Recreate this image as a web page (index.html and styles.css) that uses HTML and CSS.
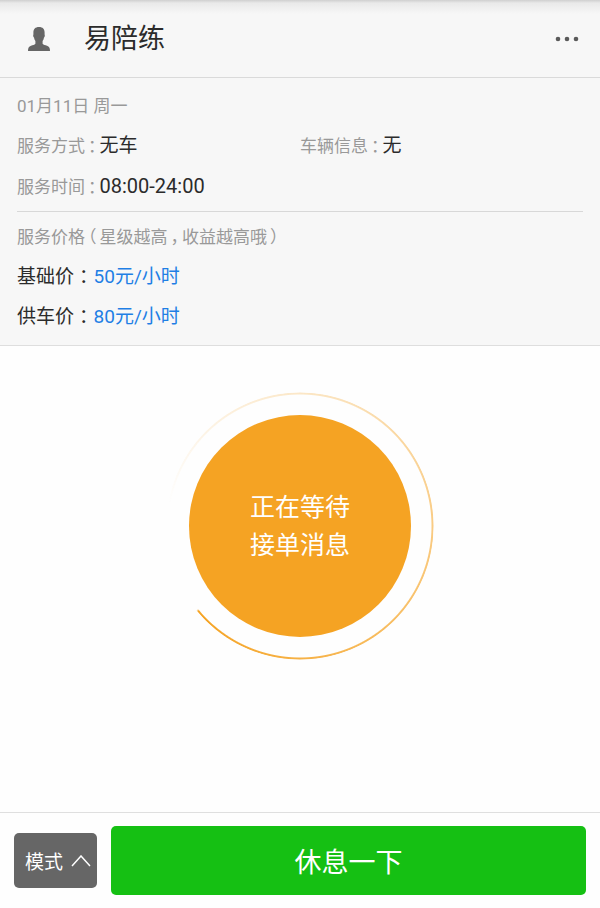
FILE: index.html
```
<!DOCTYPE html>
<html lang="zh-CN">
<head>
<meta charset="UTF-8" />
<meta name="viewport" content="width=device-width, initial-scale=1" />
<title>易陪练</title>
<link rel="stylesheet" href="styles.css">
</head>
<body>
  <header class="topbar">
    <button class="icon-btn" type="button" aria-label="个人中心">
      <svg class="user-icon" viewBox="0 0 26 26" aria-hidden="true">
        <path d="M13 1C9.200 1 7.400 3.200 7.400 6.500v2c-.5.5-.2 2.700.6 3.100.2 1.500.7 2.600 1.400 3.400v2.700C8.500 18.800 6.800 19 5 19.700 2.800 20.500 2 22 2 25h22c0-3-.8-4.500-3-5.300-1.800-.7-3.500-.9-4.400-2V15c.7-.8 1.200-1.900 1.400-3.400.8-.4 1.100-2.600.6-3.100v-2C18.600 3.200 16.800 1 13 1z"/>
      </svg>
    </button>
    <h1 class="title">易陪练</h1>
    <button class="icon-btn more" type="button" aria-label="更多">
      <svg class="more-icon" viewBox="0 0 26 6" aria-hidden="true">
        <circle cx="4" cy="3" r="2.300"/>
        <circle cx="13" cy="3" r="2.300"/>
        <circle cx="22" cy="3" r="2.300"/>
      </svg>
    </button>
  </header>

  <section class="info">
    <div class="info-group">
      <p class="row label">01月11日 周一</p>
      <div class="row cols">
        <p><span class="label">服务方式<span class="punct">：</span></span><span class="value">无车</span></p>
        <p><span class="label">车辆信息<span class="punct">：</span></span><span class="value">无</span></p>
      </div>
      <p class="row"><span class="label">服务时间<span class="punct">：</span></span><span class="time">08:00-24:00</span></p>
    </div>
    <div class="info-group">
      <p class="row label">服务价格<span class="punct">（</span>星级越高<span class="punct">，</span>收益越高哦<span class="punct">）</span></p>
      <p class="row value">基础价<span class="punct">：</span><span class="price">50元/小时</span></p>
      <p class="row value">供车价<span class="punct">：</span><span class="price">80元/小时</span></p>
    </div>
  </section>

  <main class="waiting">
    <div class="ring">
      <div class="disc" role="status">正在等待<br>接单消息</div>
    </div>
  </main>

  <footer class="actions">
    <button class="btn mode" type="button">模式
      <svg class="chevron" viewBox="0 0 20 12" aria-hidden="true">
        <path d="M1 11 10 1l9 10"/>
      </svg>
    </button>
    <button class="btn rest" type="button">休息一下</button>
  </footer>
</body>
</html>
```
FILE: styles.css
```
* {
  box-sizing: border-box;
}

body {
  margin: 0;
  min-height: 100vh;
  display: flex;
  flex-direction: column;
  background: #fefefe;
  color: #2b2b2b;
  font-family: Roboto, "Noto Sans CJK SC", sans-serif;
  font-size: 19px;
}

h1, p {
  margin: 0;
  font-weight: 400;
}

button {
  border: none;
  padding: 0;
  font-family: inherit;
  cursor: pointer;
}

/* Header */
.topbar {
  display: flex;
  align-items: center;
  height: 78px;
  padding: 0 20px 0 26px;
  background: linear-gradient(#cfcfcf, #e9e9e9 3px, #f7f7f7 14px);
  border-bottom: 1px solid #dadada;
}

.icon-btn {
  display: flex;
  background: none;
}

.user-icon {
  width: 26px;
  height: 26px;
  fill: #666;
}

.title {
  margin-left: 32px;
  font-size: 27px;
  line-height: 40px;
}

.more {
  margin-left: auto;
}

.more-icon {
  width: 26px;
  height: 6px;
  fill: #5a5a5a;
}

/* Service details */
.info {
  padding: 8px 17px;
  background: #f7f7f7;
  border-bottom: 1px solid #dedede;
}

.info-group + .info-group {
  margin-top: 5px;
  padding-top: 5px;
  border-top: 1px solid #d8d8d8;
}

.row {
  height: 40px;
  line-height: 40px;
}

.cols {
  display: grid;
  grid-template-columns: 1fr 1fr;
}

.label {
  font-size: 17px;
  color: #999;
}

.value {
  font-size: 19px;
}

.time {
  font-size: 20px;
}

/* half-width punctuation with even space on both sides */
.punct {
  font-feature-settings: "halt";
  padding: 0 3px;
}

.value .punct {
  padding: 0 5px;
}

.price {
  color: #1f7fe5;
}

/* Waiting indicator */
.waiting {
  flex: 1;
  display: flex;
  justify-content: center;
  align-items: flex-start;
  padding: 46px 0;
}

.ring {
  position: relative;
  padding: 23px;
}

.ring::before {
  content: "";
  position: absolute;
  inset: 0;
  border-radius: 50%;
  background: conic-gradient(from 270deg, #f5a32300 10deg, #f5a32340 90deg, #f5a32390 180deg, #f5a323 320deg, #f5a32300 321deg);
  -webkit-mask: radial-gradient(closest-side, transparent calc(100% - 3px), #000 calc(100% - 2px), #000 calc(100% - 1px), transparent);
  mask: radial-gradient(closest-side, transparent calc(100% - 3px), #000 calc(100% - 2px), #000 calc(100% - 1px), transparent);
}

.disc {
  display: flex;
  align-items: center;
  justify-content: center;
  width: 222px;
  height: 222px;
  padding-top: 2px;
  border-radius: 50%;
  background: #f5a323;
  color: #fff;
  font-size: 25px;
  line-height: 38px;
}

/* Bottom bar */
.actions {
  display: flex;
  align-items: center;
  gap: 14px;
  padding: 13px 14px;
  background: #fefefe;
  border-top: 1px solid #dfdfdf;
}

.btn {
  border-radius: 5px;
  color: #fff;
}

.mode {
  display: flex;
  align-items: center;
  justify-content: space-between;
  padding: 0 6px 0 11px;
  width: 83px;
  height: 55px;
  background: #666;
  font-size: 19px;
}

.chevron {
  width: 20px;
  height: 12px;
  fill: none;
  stroke: #fff;
  stroke-width: 1.5;
}

.rest {
  flex: 1;
  height: 69px;
  background: #15c013;
  font-size: 27px;
}
```
